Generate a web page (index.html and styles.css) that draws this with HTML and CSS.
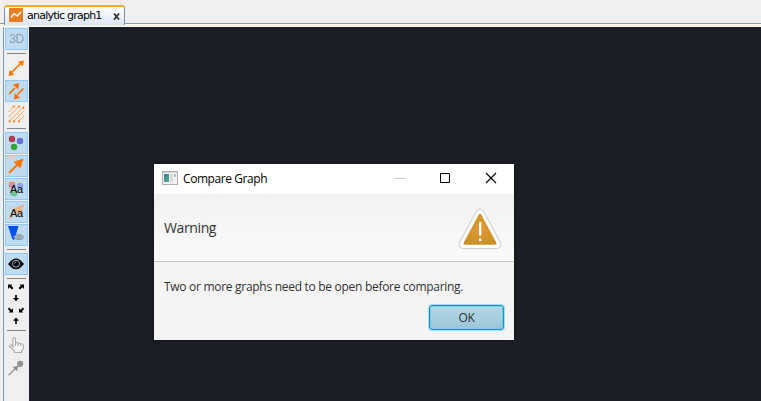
FILE: index.html
```
<!DOCTYPE html>
<html lang="en">
<head>
<meta charset="utf-8">
<title>Compare Graph</title>
<link rel="stylesheet" href="styles.css">
</head>
<body>
<div class="app">
  <header class="tabs">
    <div class="tab">
      <svg class="tab-icon" width="14" height="14" viewBox="0 0 14 14"><rect width="14" height="14" rx="1" fill="#e67e22"/><path d="M2 9.500 5 5.500 8.200 8 12 4" fill="none" stroke="#fff" stroke-width="1.500"/></svg>
      <span class="tab-title">analytic graph1</span>
      <svg class="tab-close" width="7" height="7" viewBox="0 0 7 7"><path d="M1 .5 6 6.500M6 .5 1 6.500" stroke="#333" stroke-width="1.800"/></svg>
    </div>
  </header>
  <div class="workspace">
    <nav class="toolbar">
      <div class="tool on"><span class="three-d">3D</span></div>
      <hr class="sep">
      <div class="tool"><svg viewBox="0 0 23 22"><g fill="#ff7800"><path d="m6 16 10.500-10.500" stroke="#ff7800" stroke-width="1.700"/><path d="M19 3.500 17.800 9.500 13 4.700ZM3.500 19 4.700 13 9.500 17.800Z"/></g></svg></div>
      <div class="tool on"><svg viewBox="0 0 23 22"><g fill="#ff6c00" stroke="#ff6c00"><path d="m4 14 6-6M18.500 8.500l-6 6" stroke-width="1.600"/><path stroke="none" d="M14 3 13.200 9.500 8 4.700ZM9 19.500l.8-6.500 5.200 4.800Z"/></g></svg></div>
      <div class="tool"><svg viewBox="0 0 23 22"><g fill="#ff7800" stroke="#ff9a48"><path d="M3.500 9 9 3.500M3.500 14 14 3.500M4.500 18 18 4.500M9 18l10-10M14 18l5-5" stroke-width=".9"/><path stroke="none" d="m10 2.500-.6 2.600-2-2ZM15 2.500l-.6 2.600-2-2ZM19.500 3.500l-.6 2.600-2-2ZM3.500 19.500l.6-2.600 2 2ZM8 19.500l.6-2.600 2 2ZM13 19.500l.6-2.600 2 2Z"/></g></svg></div>
      <hr class="sep">
      <div class="tool on"><svg viewBox="0 0 23 22"><circle cx="7" cy="7" r="3.200" fill="#ae3e4c"/><circle cx="15" cy="9" r="3.200" fill="#6670db"/><circle cx="9" cy="15" r="3.200" fill="#33a637"/></svg></div>
      <div class="tool on"><svg viewBox="0 0 23 22"><path d="M4 18 14 8" stroke="#ff7800" stroke-width="2.200"/><path d="M18.500 3.500 15.500 13.500 8.500 6.800Z" fill="#ff7800"/></svg></div>
      <div class="tool on"><svg viewBox="0 0 23 22"><circle cx="7" cy="7" r="3.500" fill="#c995a8"/><circle cx="15" cy="8" r="3.200" fill="#91a6eb"/><circle cx="9" cy="15" r="3.500" fill="#70c594"/><text class="aa" x="5" y="15" textLength="13">Aa</text></svg></div>
      <div class="tool on"><svg viewBox="0 0 23 22"><path d="M3.500 18 10 10 7.500 8 18.500 3.500 16 14.500 12 11.500 4.500 18.500Z" fill="#efb182"/><text class="aa" x="5" y="16" textLength="13">Aa</text></svg></div>
      <div class="tool on"><svg viewBox="0 0 23 22"><path d="M3 2H13.500L9.500 15.500H7.500Z" fill="#0050ff"/><path d="M9 13Q14 7.500 19 13 14 18.500 9 13Z" fill="#bdcbd3" stroke="#93a3ad" stroke-width="1.200"/><circle cx="14" cy="13" r="2" fill="#a5b3bb" stroke="#8798a2"/></svg></div>
      <hr class="sep">
      <div class="tool on"><svg viewBox="0 0 23 22"><path d="M3 11Q11-.2 19 11 11 21.500 3 11Z" fill="#000"/><circle cx="11" cy="10.700" r="3.500" fill="none" stroke="#9fc4df" stroke-width="1"/><path d="M9.500 10.500Q10 9 11.500 9" stroke="#bfe0f6" fill="none" stroke-width=".8"/></svg></div>
      <hr class="sep">
      <div class="tool"><svg viewBox="0 0 23 22"><path d="M3 2.500H7.200L6.200 3.800 8.500 6 7 7.500 4.500 5.200 3 7ZM19 2.500H14.800L15.800 3.800 13.500 6 15 7.500 17.500 5.200 19 7ZM10.200 13h1.600v3h2.200l-3 3.200L8 16h2.200Z"/></svg></div>
      <div class="tool"><svg viewBox="0 0 23 22"><path d="M8 7.500H3.800L5 6.200 2.800 4 4.200 2.500 6.500 4.700 8 3.200ZM14 7.500h4.200L17 6.200 19.200 4 17.800 2.500 15.500 4.700 14 3.200ZM10.200 19h1.600v-3.300H14L11 12.500 8 15.700h2.200Z"/></svg></div>
      <hr class="sep">
      <div class="tool"><svg viewBox="0 0 23 22"><path d="M8 13V4.500Q9.200 2.500 10.500 4.500V9Q12 7.800 13 9.300 14.500 8.300 15.500 10 18 9.200 18.300 11.500V14.500L16.500 17V18.500H9.500V17L4.500 12.500Q5 10.300 6.500 11.300ZM10.500 9v3M13 9.500v2.500M15.500 10v2" fill="#f6f6f6" stroke="#adadad" stroke-width="1.100"/></svg></div>
      <div class="tool"><svg viewBox="0 0 23 22"><circle cx="15.200" cy="6.800" r="3.100" fill="#939393"/><path d="m3.500 18.300 7-7" stroke="#999" stroke-width="1.500"/><path d="M13.500 8.500 12 14.500 7.500 10Z" fill="#939393"/></svg></div>
    </nav>
    <main class="canvas"></main>
  </div>
</div>
<section class="dialog">
  <div class="titlebar">
    <svg width="16" height="14" viewBox="0 0 16 14"><defs><linearGradient id="app" x2="1" y2="1"><stop stop-color="#427aa8"/><stop offset="1" stop-color="#55b476"/></linearGradient></defs><rect x=".5" y=".5" width="15" height="13" fill="#f2f2f2" stroke="#adb1b3"/><path d="M1 1.500h14" stroke="#d2d5d6"/><path fill="url(#app)" d="M2 3h5v8H2z"/><path fill="#dadada" d="M8 3h3v8H8z"/><path fill="#9dccc0" d="M12 3h2v3h-2z"/></svg>
    <span class="dialog-title">Compare Graph</span>
    <svg class="controls" width="104" height="12" viewBox="0 0 104 12" fill="none"><path d="M1 6.500h10" stroke="#c8c8c8"/><path d="M46.500 1.500h9v9h-9z" stroke="#000"/><path d="m92 1 10 10M102 1 92 11" stroke="#000" stroke-width="1.100"/></svg>
  </div>
  <div class="heading">
    <span class="warning">Warning</span>
    <svg width="44" height="42" viewBox="0 0 44 42"><defs><radialGradient id="amber"><stop stop-color="#e39a36"/><stop offset="1" stop-color="#c99227"/></radialGradient></defs><path d="M18.500 3.200Q22-1.500 25.500 3.200L42.500 34.500Q44.500 40.500 38 40.500H6Q-.5 40.500 1.500 34.500Z" fill="#fff" stroke="#d2d2d2" stroke-width="1.200"/><path d="M20.500 7Q22 4.500 23.500 7L38.500 35Q39 36.700 37 36.700H7Q5 36.700 5.500 35Z" fill="url(#amber)"/><path d="M21 14h2.300v13.500H21zM21 30.500h2.300v2.400H21z" fill="#fff"/></svg>
  </div>
  <div class="content">
    <p class="message">Two or more graphs need to be open before comparing.</p>
    <button class="ok">OK</button>
  </div>
</section>
</body>
</html>
```
FILE: styles.css
```
* { box-sizing: border-box; }
body { margin: 0; width: 761px; height: 401px; overflow: hidden; background: #efefef; }
.app { height: 401px; display: flex; flex-direction: column; }
.tabs { height: 27px; padding: 5px 0 0 4px; background: linear-gradient(#efefef 23px, #7d9cb8 23px, #7d9cb8 24px, #fff 24px, #fff 25px, #f0eed0 25px, #f0eed0 26px, #fff 26px); }
.tab { width: 121px; height: 20px; padding: 0 4px 0 4px; display: flex; align-items: center; border: 1px solid #7890b3; border-top: 2px solid #f5ac2b; border-bottom: 0; border-radius: 3px 3px 0 0; background: linear-gradient(#fff, #dce6fb); }
.tab-icon { flex: none; margin-top: -2px; }
.tab-title { margin-left: 4px; font: 11px/16px "DejaVu Sans", sans-serif; letter-spacing: -.77px; white-space: nowrap; color: #000; }
.tab-close { margin: 1px 0 0 auto; flex: none; }
.workspace { flex: 1; display: flex; min-height: 0; padding-left: 3px; }
.toolbar { width: 26px; padding: 1px 1px 0; display: flex; flex-direction: column; gap: 1px; border-left: 1px solid #7d9cb8; background: #efefef; }
.tool { width: 23px; height: 22px; flex: none; display: flex; align-items: center; justify-content: center; }
.tool svg { width: 23px; height: 22px; flex: none; }
.on { background: #bedbf2; box-shadow: inset 0 0 0 1px #91c9f4; }
.three-d { font: 12px/22px "Liberation Sans", sans-serif; letter-spacing: -.5px; color: #91a2b0; }
.aa { font: 11px "Liberation Sans", sans-serif; fill: #000; }
.sep { width: 19px; height: 1px; flex: none; margin: 2px 0 2px 2px; border: 0; background: #858585; }
.canvas { flex: 1; background: #1b1e25; }
.dialog { position: absolute; left: 154px; top: 164px; width: 360px; height: 176px; display: flex; flex-direction: column; background: #f4f4f4; box-shadow: 0 0 3px #101218; }
.titlebar { height: 30px; display: flex; align-items: center; padding: 0 16px 2px 8px; background: #fff; }
.dialog-title { margin: 2px 0 0 5px; font: 12px/18px "Open Sans", sans-serif; letter-spacing: -.43px; color: #000; }
.controls { margin-left: auto; }
.heading { height: 68px; display: flex; align-items: center; justify-content: space-between; padding: 2px 12px 0 10px; background: linear-gradient(#f2f2f2, #fafafa); border-bottom: 1px solid #c7c7c7; }
.warning { margin-top: -1px; font: 14px/20px "Open Sans", sans-serif; letter-spacing: -.38px; color: #333; }
.content { flex: 1; display: flex; flex-direction: column; padding: 16px 10px 10px; }
.message { margin: 0; font: 12px/18px "Open Sans", sans-serif; letter-spacing: -.29px; white-space: nowrap; color: #333; }
.ok { align-self: flex-end; margin-top: 9px; width: 75px; height: 25px; padding: 0; border: 1px solid #0d98c6; border-radius: 3px; background: linear-gradient(#b2d8e8, #9bc6d8); box-shadow: 0 0 0 1px #a6dcef, inset 0 0 0 1px #86c4dd; font: 12px/22px "Open Sans", sans-serif; letter-spacing: -.3px; color: #333; }
```
